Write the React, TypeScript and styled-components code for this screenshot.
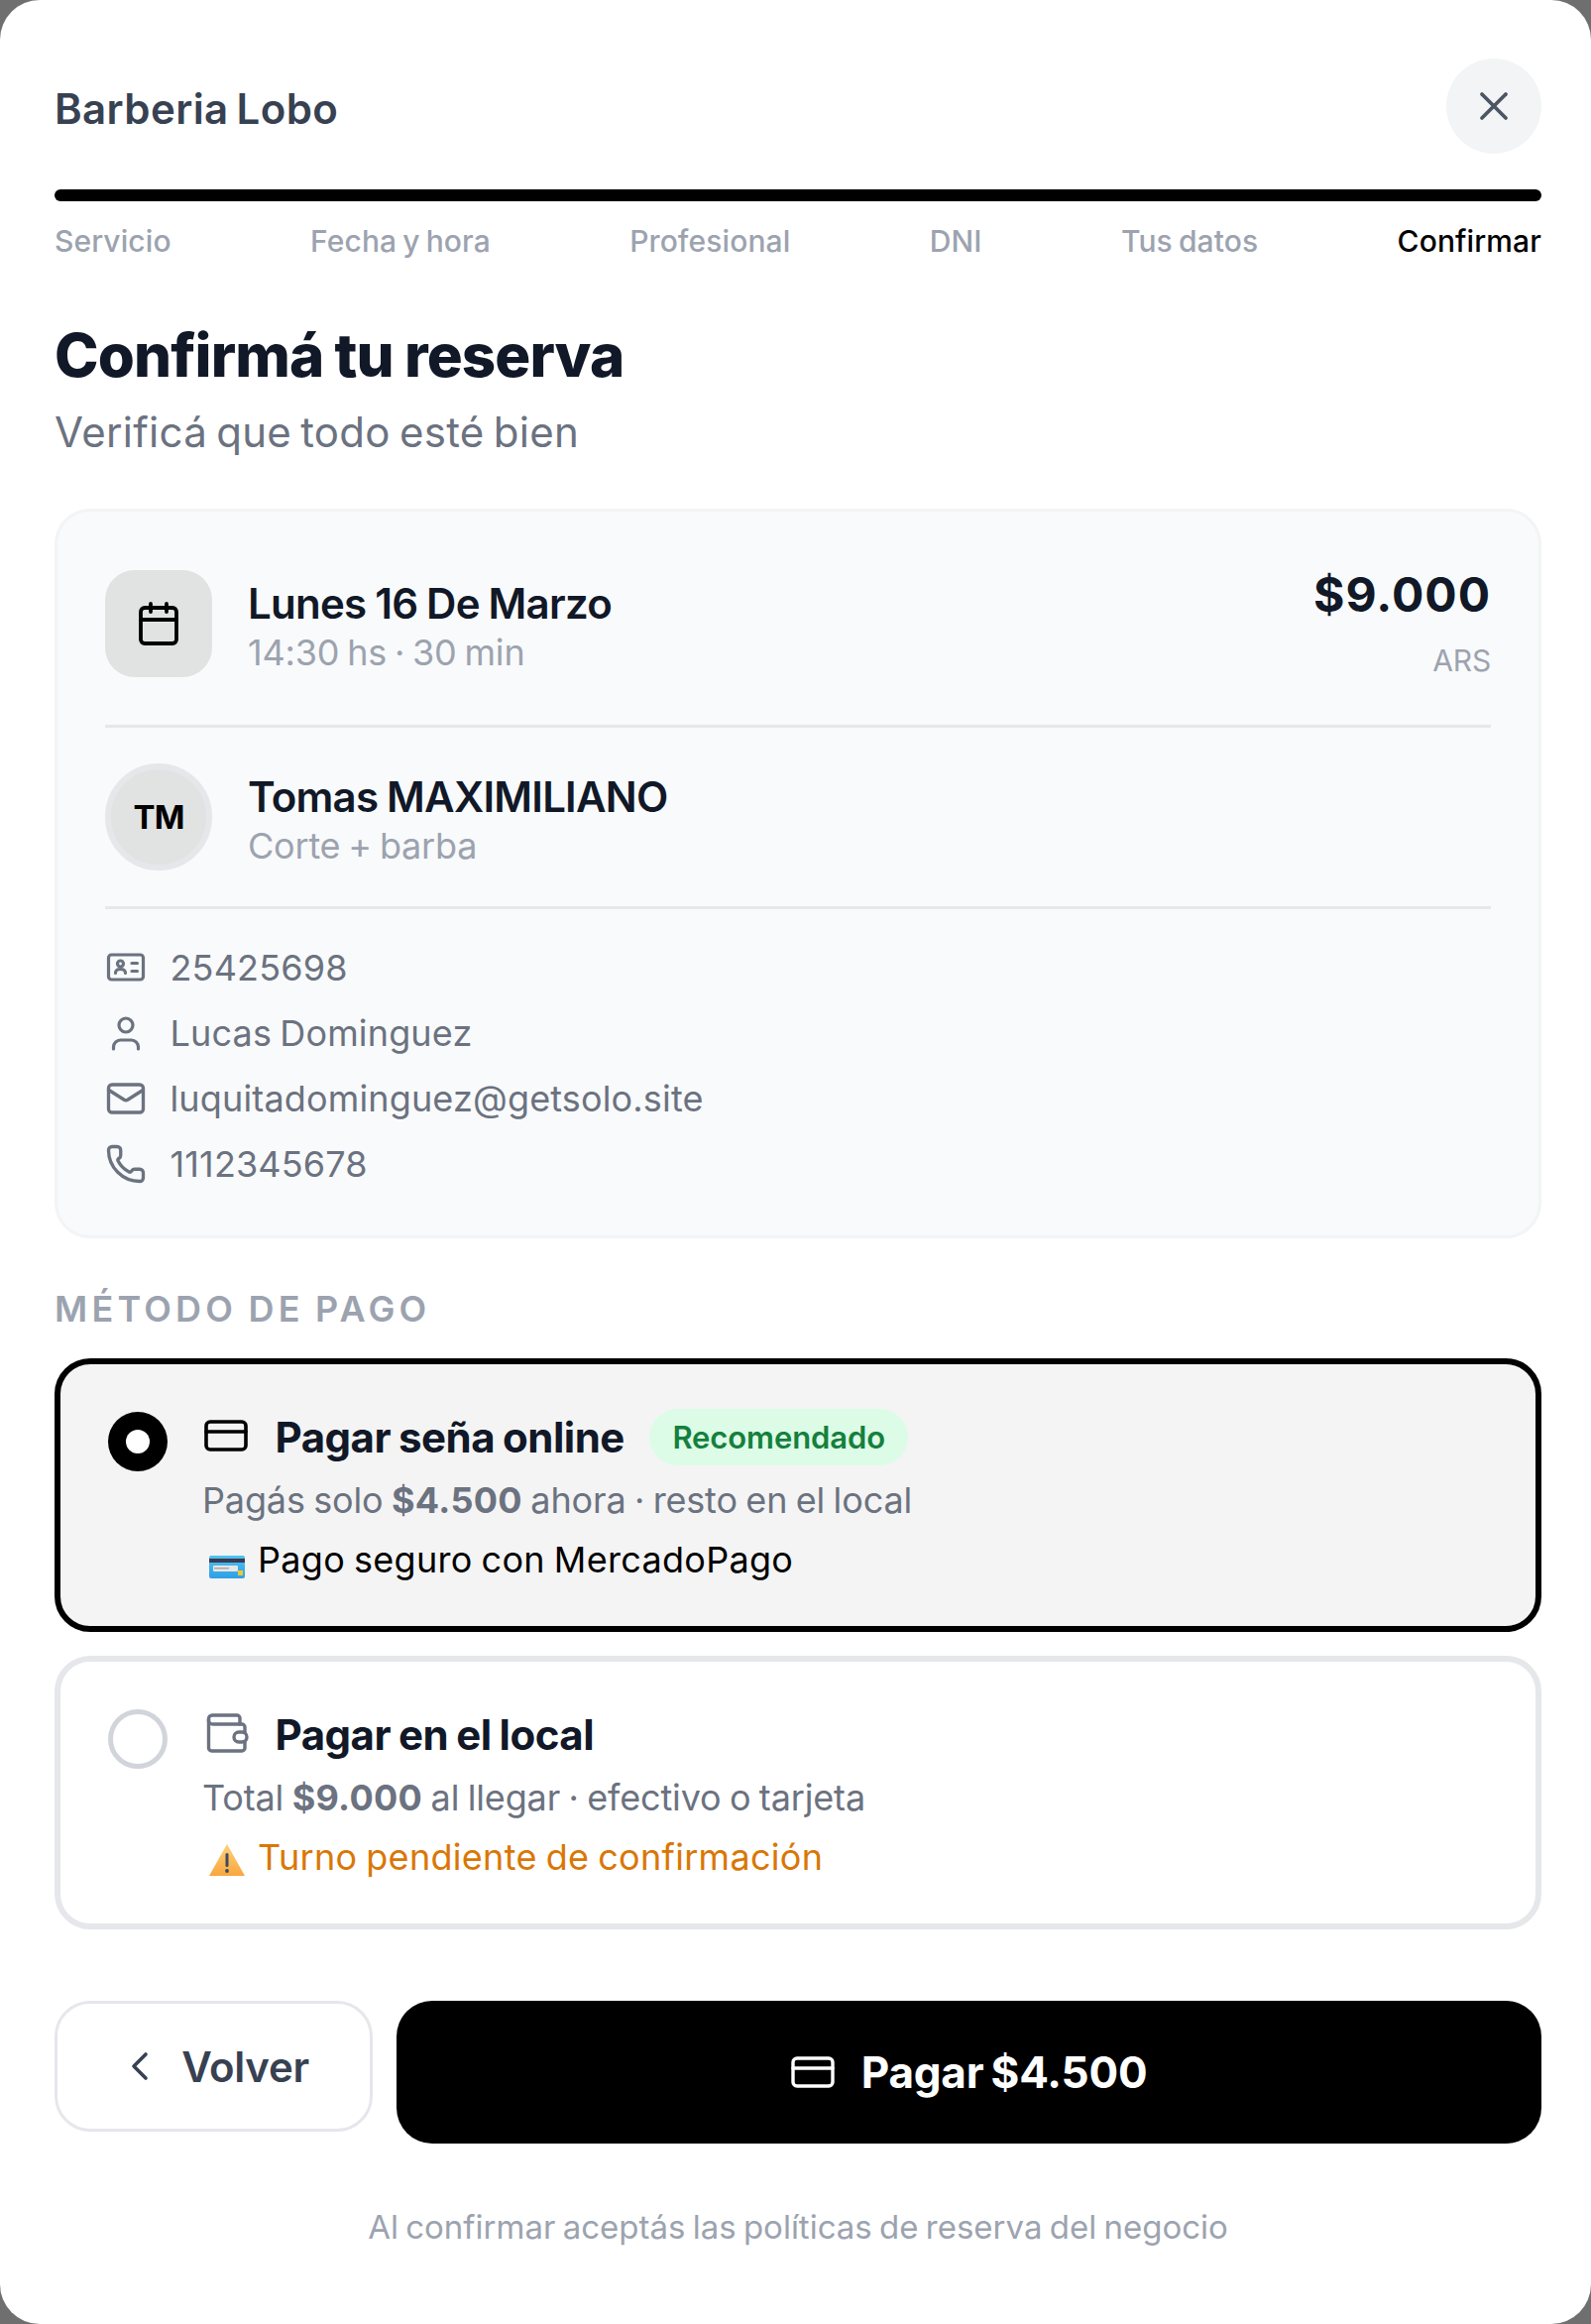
import React from "react";
import styled, { createGlobalStyle } from "styled-components";
import { X, Calendar, ChevronLeft, CreditCard, Mail, Phone } from "lucide-react";

const Global = createGlobalStyle`
  html, body { margin: 0; padding: 0; background: #6f6f6f; }
  body { font-family: "Inter", "Open Sans", sans-serif; -webkit-font-smoothing: antialiased; }
  * { box-sizing: border-box; }
`;

const Modal = styled.div`
  width: 1605px;
  height: 2344px;
  background: #fff;
  border-radius: 40px;
  padding: 59px 50px 0 55px;
  display: flex;
  flex-direction: column;
  overflow: hidden;
`;

const Header = styled.header`
  display: flex;
  align-items: center;
  justify-content: space-between;
  height: 96px;
`;

const Brand = styled.h2`
  margin: 6px 0 0;
  font-size: 42px;
  line-height: 60px;
  font-weight: 600;
  letter-spacing: 0.4px;
  word-spacing: -3px;
  color: #374151;
`;

const CloseButton = styled.button`
  width: 96px;
  height: 96px;
  border: 0;
  border-radius: 50%;
  background: #f3f4f6;
  color: #4b5563;
  display: flex;
  align-items: center;
  justify-content: center;
  padding: 0;
`;

const Progress = styled.div`
  height: 12px;
  margin-top: 36px;
  border-radius: 6px;
  background: #000;
`;

const Steps = styled.div`
  display: flex;
  justify-content: space-between;
  margin-top: 24px;
`;

const Step = styled.span<{ $active?: boolean }>`
  font-size: 30px;
  line-height: 32px;
  font-weight: 500;
  letter-spacing: 0.1px;
  word-spacing: -2px;
  color: ${(p) => (p.$active ? "#000" : "#9ca3af")};
`;

const Title = styled.h1`
  margin: 60px 0 0;
  font-size: 60px;
  line-height: 78px;
  font-weight: 800;
  letter-spacing: -0.9px;
  word-spacing: -1px;
  color: #111827;
`;

const Subtitle = styled.p`
  margin: 9px 0 0;
  font-size: 42px;
  line-height: 60px;
  font-weight: 400;
  letter-spacing: 0.3px;
  word-spacing: -3px;
  color: #6b7280;
`;

const Card = styled.section`
  margin-top: 47px;
  height: 736px;
  background: #f9fafb;
  border: 3px solid #f3f4f6;
  border-radius: 36px;
  padding: 59px 48px 0;
  display: flex;
  flex-direction: column;
`;

const Row = styled.div`
  display: flex;
  align-items: center;
  gap: 36px;
  height: 108px;
`;

const Tile = styled.div`
  flex: none;
  width: 108px;
  height: 108px;
  border-radius: 30px;
  background: #e1e3e2;
  color: #000;
  display: flex;
  align-items: center;
  justify-content: center;
`;

const Avatar = styled.div`
  flex: none;
  width: 108px;
  height: 108px;
  border-radius: 50%;
  background: #e1e3e2;
  border: 6px solid #e5e7eb;
  color: #000;
  font-size: 33px;
  font-weight: 700;
  display: flex;
  align-items: center;
  justify-content: center;
  letter-spacing: -1px;
`;

const Info = styled.div`
  flex: 1;
  min-width: 0;
  padding-top: 7px;
`;

const RowTitle = styled.div`
  font-size: 42px;
  line-height: 50px;
  font-weight: 600;
  letter-spacing: -0.75px;
  word-spacing: -1px;
  color: #111827;
`;

const RowSub = styled.div`
  font-size: 36px;
  line-height: 48px;
  font-weight: 400;
  letter-spacing: -0.2px;
  word-spacing: -2px;
  color: #9ca3af;
`;

const Price = styled.div`
  align-self: flex-start;
  text-align: right;
`;

const Amount = styled.div`
  font-size: 48px;
  line-height: 54px;
  font-weight: 700;
  letter-spacing: 1px;
  color: #111827;
  margin-top: -2px;
`;

const Currency = styled.div`
  margin-top: 23px;
  font-size: 30px;
  line-height: 32px;
  color: #9ca3af;
  letter-spacing: -0.2px;
`;

const Divider = styled.hr<{ $top: number; $bottom: number }>`
  border: 0;
  height: 3px;
  background: #e5e7eb;
  margin: ${(p) => p.$top}px 0 ${(p) => p.$bottom}px;
  flex: none;
`;

const Details = styled.div`
  display: flex;
  flex-direction: column;
`;

const Detail = styled.div`
  display: flex;
  align-items: center;
  gap: 23.5px;
  height: 66px;
  font-size: 36px;
  font-weight: 400;
  letter-spacing: 0.15px;
  word-spacing: -2px;
  color: #6b7280;
`;

const DetailIcon = styled.svg`
  flex: none;
  width: 42px;
  height: 42px;
  fill: none;
  stroke: #6b7280;
  stroke-width: 3.2;
  stroke-linecap: round;
  stroke-linejoin: round;
`;

const Label = styled.div`
  margin-top: 51px;
  font-size: 36px;
  line-height: 40px;
  font-weight: 600;
  letter-spacing: 4.2px;
  word-spacing: -2px;
  color: #9ca3af;
`;

const Options = styled.div`
  margin-top: 30px;
  display: flex;
  flex-direction: column;
  gap: 24px;
`;

const Option = styled.div<{ $selected?: boolean }>`
  height: 276px;
  border-radius: 36px;
  border: ${(p) => (p.$selected ? "6px solid #000" : "6px solid #e5e7eb")};
  background: ${(p) => (p.$selected ? "#f4f4f4" : "#fff")};
  padding: 43.5px 48px 0 48px;
  display: flex;
  gap: 36px;
`;

const Radio = styled.div<{ $selected?: boolean }>`
  flex: none;
  width: 60px;
  height: 60px;
  border-radius: 50%;
  margin-top: 4.5px;
  background: ${(p) => (p.$selected ? "#000" : "transparent")};
  border: ${(p) => (p.$selected ? "0" : "5px solid #d1d5db")};
  display: flex;
  align-items: center;
  justify-content: center;
`;

const RadioDot = styled.div`
  width: 24px;
  height: 24px;
  border-radius: 50%;
  background: #fff;
`;

const OptionBody = styled.div`
  flex: 1;
  min-width: 0;
  margin-left: -1px;
`;

const OptionHead = styled.div`
  display: flex;
  align-items: center;
  height: 60px;
  gap: 24.5px;
`;

const HeadIcon = styled.span`
  flex: none;
  display: flex;
  margin: -4px 0 0 0;
  padding-right: 1px;
  color: #000;
`;

const OptionTitle = styled.span`
  font-size: 42px;
  font-weight: 700;
  letter-spacing: -0.5px;
  word-spacing: -1.5px;
  color: #111827;
`;

const Badge = styled.span`
  height: 57px;
  margin: -1px 0 0 1px;
  padding: 0 23px;
  border-radius: 29px;
  background: #dcfce7;
  color: #15803d;
  font-size: 31px;
  font-weight: 600;
  letter-spacing: -0.1px;
  display: inline-flex;
  align-items: center;
`;

const OptionText = styled.div`
  margin-top: 3px;
  font-size: 36px;
  line-height: 60px;
  letter-spacing: -0.15px;
  word-spacing: -1.5px;
  color: #6b7280;
  b { font-weight: 700; letter-spacing: 0.3px; }
`;

const OptionNote = styled.div<{ $warn?: boolean }>`
  display: flex;
  align-items: center;
  gap: 13px;
  font-size: 36px;
  line-height: 60px;
  letter-spacing: 0.3px;
  word-spacing: -1.5px;
  color: ${(p) => (p.$warn ? "#d97706" : "#000")};
`;

const Emoji = styled.svg`
  flex: none;
  width: 36px;
  height: 36px;
  margin: 10px 0 0 7px;
`;

const OptionIcon = styled.svg`
  flex: none;
  width: 48px;
  height: 48px;
  fill: none;
  stroke-width: 3.4;
  stroke-linecap: round;
  stroke-linejoin: round;
`;

const Actions = styled.div`
  margin-top: 72px;
  display: flex;
  gap: 24px;
  align-items: flex-start;
`;

const BackButton = styled.button`
  flex: none;
  width: 321px;
  height: 132px;
  border: 3px solid #e5e7eb;
  border-radius: 36px;
  background: #fff;
  color: #374151;
  display: flex;
  align-items: center;
  justify-content: center;
  gap: 18px;
  font-family: inherit;
  font-size: 42px;
  font-weight: 600;
  letter-spacing: -0.3px;
  padding: 0 2px 0 0;
`;

const PayButton = styled.button`
  flex: 1;
  height: 144px;
  border: 0;
  border-radius: 36px;
  background: #000;
  color: #fff;
  display: flex;
  align-items: center;
  justify-content: center;
  gap: 25px;
  font-family: inherit;
  font-size: 44px;
  font-weight: 700;
  letter-spacing: -0.2px;
  word-spacing: -3px;
  padding: 0 2px 0 0;
`;

const Legal = styled.p`
  margin: 66px 0 0;
  text-align: center;
  font-size: 33px;
  line-height: 36px;
  letter-spacing: 0;
  word-spacing: -2px;
  color: #9ca3af;
`;

const CardEmoji = () => (
  <Emoji viewBox="0 0 36 36" aria-hidden="true">
    <defs>
      <linearGradient id="cg" x1="0" y1="0" x2="0" y2="1">
        <stop offset="0" stopColor="#4fc3f0" />
        <stop offset="1" stopColor="#2f9fe6" />
      </linearGradient>
    </defs>
    <rect x="0" y="9" width="36" height="23" rx="2" fill="url(#cg)" />
    <rect x="0" y="12" width="36" height="4" fill="#3a3a52" />
    <rect x="4" y="19" width="25" height="6" rx="1" fill="#e6e6e6" />
    <rect x="5" y="21" width="15" height="1.500" fill="#a8a8a8" />
    <rect x="29" y="24" width="5" height="5" fill="#f4c72e" />
  </Emoji>
);

const WarnEmoji = () => (
  <Emoji viewBox="0 0 36 36" aria-hidden="true">
    <defs>
      <linearGradient id="wg" x1="0" y1="0" x2="0" y2="1">
        <stop offset="0" stopColor="#fcd27a" />
        <stop offset="1" stopColor="#f9a63f" />
      </linearGradient>
    </defs>
    <path d="M18 0 L36 32 H0 Z" fill="url(#wg)" />
    <rect x="16.500" y="9" width="3" height="14" rx="1.500" fill="#3f4a5e" />
    <circle cx="18" cy="27" r="1.900" fill="#3f4a5e" />
  </Emoji>
);

export default function App() {
  return (
    <>
      <Global />
      <Modal>
        <Header>
          <Brand>Barberia Lobo</Brand>
          <CloseButton aria-label="Cerrar">
            <X size={48} strokeWidth={1.9} />
          </CloseButton>
        </Header>
        <Progress />
        <Steps>
          <Step>Servicio</Step>
          <Step>Fecha y hora</Step>
          <Step>Profesional</Step>
          <Step>DNI</Step>
          <Step>Tus datos</Step>
          <Step $active>Confirmar</Step>
        </Steps>
        <Title>Confirmá tu reserva</Title>
        <Subtitle>Verificá que todo esté bien</Subtitle>
        <Card>
          <Row>
            <Tile>
              <Calendar size={48} strokeWidth={1.9} />
            </Tile>
            <Info>
              <RowTitle>Lunes 16 De Marzo</RowTitle>
              <RowSub>14:30 hs · 30 min</RowSub>
            </Info>
            <Price>
              <Amount>$9.000</Amount>
              <Currency>ARS</Currency>
            </Price>
          </Row>
          <Divider $top={48} $bottom={36} />
          <Row>
            <Avatar>TM</Avatar>
            <Info>
              <RowTitle>Tomas MAXIMILIANO</RowTitle>
              <RowSub>Corte + barba</RowSub>
            </Info>
          </Row>
          <Divider $top={36} $bottom={26} />
          <Details>
            <Detail>
              <DetailIcon viewBox="0 0 42 42">
                <rect x="3.500" y="8" width="35" height="25" rx="3" />
                <circle cx="15.500" cy="17" r="3" />
                <path d="M10.500 26.500c0-2.500 2-4 5-4s5 1.500 5 4" />
                <path d="M27 16.500h5.500M27 24.500h5.500" />
              </DetailIcon>
              25425698
            </Detail>
            <Detail>
              <DetailIcon viewBox="0 0 42 42">
                <circle cx="21" cy="13" r="7" />
                <path d="M8.500 37v-2a7 7 0 0 1 7-7h11a7 7 0 0 1 7 7v2" />
              </DetailIcon>
              Lucas Dominguez
            </Detail>
            <Detail>
              <Mail size={42} strokeWidth={1.9} color="#6b7280" />
              luquitadominguez@getsolo.site
            </Detail>
            <Detail>
              <Phone size={42} strokeWidth={1.9} color="#6b7280" />
              1112345678
            </Detail>
          </Details>
        </Card>
        <Label>MÉTODO DE PAGO</Label>
        <Options>
          <Option $selected>
            <Radio $selected>
              <RadioDot />
            </Radio>
            <OptionBody>
              <OptionHead>
                <HeadIcon>
                  <CreditCard size={48} strokeWidth={1.8} />
                </HeadIcon>
                <OptionTitle>Pagar seña online</OptionTitle>
                <Badge>Recomendado</Badge>
              </OptionHead>
              <OptionText>
                Pagás solo <b>$4.500</b> ahora · resto en el local
              </OptionText>
              <OptionNote>
                <CardEmoji />
                Pago seguro con MercadoPago
              </OptionNote>
            </OptionBody>
          </Option>
          <Option>
            <Radio>{null}</Radio>
            <OptionBody>
              <OptionHead>
                <HeadIcon>
                  <OptionIcon viewBox="0 0 48 48" stroke="#6b7280">
                    <path d="M38 15V9a3 3 0 0 0-3-3H10a3.500 3.500 0 0 0-3.500 3.500V39a3 3 0 0 0 3 3H40a3 3 0 0 0 3-3v-6" />
                    <path d="M6.500 10a4 4 0 0 0 4 5H40a3 3 0 0 1 3 3v5" />
                    <rect x="32" y="23" width="13" height="10" rx="5" />
                  </OptionIcon>
                </HeadIcon>
                <OptionTitle>Pagar en el local</OptionTitle>
              </OptionHead>
              <OptionText>
                Total <b>$9.000</b> al llegar · efectivo o tarjeta
              </OptionText>
              <OptionNote $warn>
                <WarnEmoji />
                Turno pendiente de confirmación
              </OptionNote>
            </OptionBody>
          </Option>
        </Options>
        <Actions>
          <BackButton>
            <ChevronLeft size={48} strokeWidth={1.8} />
            Volver
          </BackButton>
          <PayButton>
            <CreditCard size={48} strokeWidth={1.7} />
            Pagar $4.500
          </PayButton>
        </Actions>
        <Legal>Al confirmar aceptás las políticas de reserva del negocio</Legal>
      </Modal>
    </>
  );
}
